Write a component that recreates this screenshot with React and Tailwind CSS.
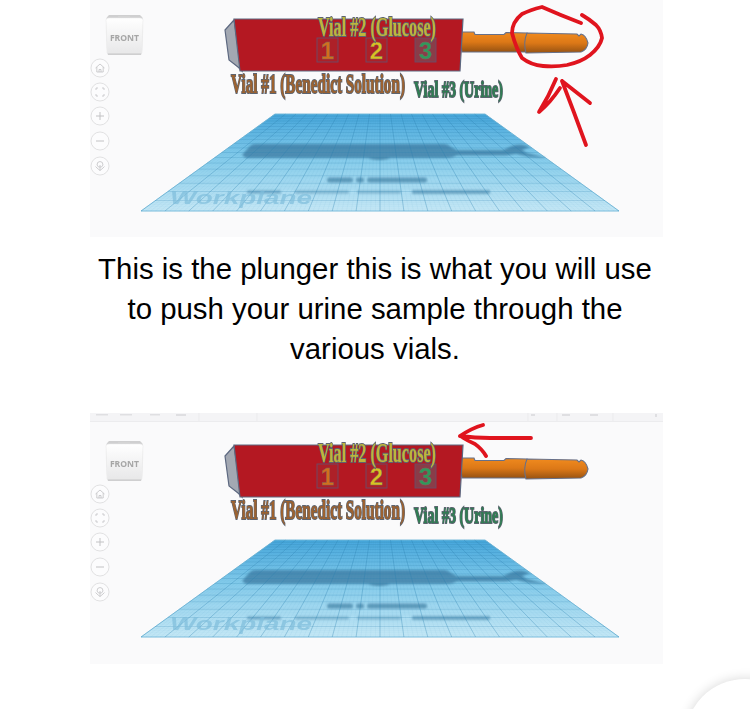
import React from "react";

const planeRows = (n) =>
  Array.from({ length: n + 1 }, (_, i) => {
    const v = i / n;
    const w = 1 / ((1 - v) / 210 + v / 478);
    const y = 114 + (97 * (w - 210)) / 268;
    const half = w / 2;
    return { y, x1: 290 - half, x2: 290 + half };
  });

const planeCols = (n) =>
  Array.from({ length: n + 1 }, (_, i) => {
    const u = i / n;
    return { x1: 185 + 210 * u, x2: 51 + 478 * u };
  });

const Workplane = () => (
  <g>
    <polygon points="185,114 395,114 529,211 51,211" fill="url(#planeFill)" stroke="#8ccde8" strokeWidth="0.8" />
    <g filter="url(#soft)">
      <path
        d="M152 155 L160 146 Q162 144 166 144 L354 144 Q358 144 361 147 L367 150 L413 150 L422 146 Q428 144 433 145 L440 147 L432 150 L437 153 L457 158 L440 157 L426 154 L416 155.5 L367 155.5 Q362 158 356 158 L300 158 Q296 160 288 160 Q282 160 278 158 L156 158 Z"
        fill="#3f7ea3"
        opacity="0.78"
      />
      <rect x="237" y="177.5" width="26" height="5" rx="2.5" fill="#4d8bad" opacity="0.8" />
      <rect x="266" y="177.5" width="8" height="5" rx="2.5" fill="#4d8bad" opacity="0.8" />
      <rect x="277" y="177.5" width="60" height="5" rx="2.5" fill="#4d8bad" opacity="0.8" />
      <rect x="157" y="190.5" width="34" height="3" rx="1" fill="#4d8bad" opacity="0.65" />
      <rect x="205" y="190.5" width="54" height="3" rx="1" fill="#4d8bad" opacity="0.5" />
      <rect x="267" y="190.5" width="44" height="3" rx="1" fill="#4d8bad" opacity="0.5" />
      <rect x="322" y="190" width="78" height="4" rx="1" fill="#4d8bad" opacity="0.65" />
    </g>
    {planeCols(100).map((c, i) => (
      <line key={i} x1={c.x1} y1="114" x2={c.x2} y2="211" stroke="#2f86b5" strokeWidth="0.4" opacity="0.12" />
    ))}
    {planeRows(100).map((r, i) => (
      <line key={i} x1={r.x1} y1={r.y} x2={r.x2} y2={r.y} stroke="#2f86b5" strokeWidth="0.4" opacity="0.08" />
    ))}
    {planeCols(20).map((c, i) => (
      <line key={i} x1={c.x1} y1="114" x2={c.x2} y2="211" stroke="#2b7fae" strokeWidth="0.6" opacity="0.5" />
    ))}
    {planeRows(20).map((r, i) => (
      <line key={i} x1={r.x1} y1={r.y} x2={r.x2} y2={r.y} stroke="#2b7fae" strokeWidth="0.6" opacity="0.35" />
    ))}
    <text
      x="80"
      y="204"
      fontFamily="'Liberation Sans', sans-serif"
      fontStyle="italic"
      fontWeight="700"
      fontSize="19"
      textLength="142"
      lengthAdjust="spacingAndGlyphs"
      fill="#7fbedc"
      opacity="0.7"
    >
      Workplane
    </text>
  </g>
);

const ViewCube = () => (
  <g>
    <path d="M17 52 L16 20 Q16 18 18 16 L19 15 L50 15 L52 17 Q53 18 53 20 L52 52 L51 55 L18 55 Z" fill="#cfcfd0" />
    <path d="M17 53 L16 20 Q16 18 19 18 L50 18 Q53 18 53 20 L52 53 Z" fill="url(#cubeFill)" stroke="#ececec" strokeWidth="0.6" />
    <rect x="28" y="16" width="12" height="1" fill="#d4d4d4" />
    <text x="34.5" y="41" textAnchor="middle" fontFamily="'Open Sans', sans-serif" fontWeight="700" fontSize="8.6" fill="#a6a6a6">
      FRONT
    </text>
  </g>
);

const SideButtons = () => (
  <g fill="none" stroke="#c2c2c4" strokeWidth="0.8">
    {[68, 92, 116, 141, 166].map((y) => (
      <circle key={y} cx="10" cy={y} r="9" fill="#fcfcfd" stroke="#d9d9db" />
    ))}
    <path d="M5.5 68 L10 64 L14.5 68 M6.8 67 V72 H13.2 V67 M9 72 V69.5 H11 V72" />
    <path d="M6 90 V88 H8 M12 88 H14 V90 M14 94 V96 H12 M8 96 H6 V94" />
    <path d="M10 112 V120 M6 116 H14" strokeWidth="1" />
    <path d="M6 141 H14" strokeWidth="1" />
    <path d="M7 165 Q7 161.5 10 161.5 Q13 161.5 13 165 L11.5 167 H8.5 Z M10 165 V170.5 M7 168 L10 170.5 L13 168 M5.5 166.5 L7 168 M14.5 166.5 L13 168" />
  </g>
);

const Plunger = () => (
  <g stroke="#66708a" strokeWidth="1.1" fill="url(#plungerFill)">
    <path d="M372 32 L384 32 L385 34.5 L414 34.5 L416 32.5 L437 33 L437 52 L372 52 Q370 42 372 32 Z" />
    <path d="M437 33 L487 34 L489 36 L491 34 Q496 35 498 43 Q497 50 491 52 L436 53 Q433 42 437 33 Z" />
  </g>
);

const CylinderBody = () => (
  <g>
    <polygon points="144,20 135,30 139,60 148,67 152,71" fill="#a3a8b2" stroke="#5c6880" strokeWidth="1.2" />
    <polygon points="144,19 373,19 370,71 150,71" fill="#b41822" stroke="#5c6880" strokeWidth="1.2" />
  </g>
);

const NumberBox = ({ x, w, color, digit, tint }) => (
  <g>
    <rect x={x} y="38" width={w} height="24" fill={tint} stroke="#6b4c68" strokeWidth="0.9" />
    <text
      x={x + w / 2}
      y="59"
      textAnchor="middle"
      fontFamily="'Liberation Sans', sans-serif"
      fontWeight="700"
      fontSize="24"
      fill={color}
      stroke="#7a6a60"
      strokeWidth="0.4"
    >
      {digit}
    </text>
  </g>
);

// squeezed serif labels, the muddy look comes from the heavy outline
const Label = ({ x, y, width, squeeze, size, fill, children }) => (
  <g transform={`translate(${x} ${y}) scale(${squeeze} 1)`}>
    <text
      x="0"
      y="0"
      fontFamily="'Liberation Serif', serif"
      fontWeight="700"
      fontSize={size}
      textLength={width / squeeze}
      lengthAdjust="spacingAndGlyphs"
      fill={fill}
      stroke="#5d6470"
      strokeWidth="2"
      paintOrder="stroke"
    >
      {children}
    </text>
  </g>
);

const Model = () => (
  <g>
    <Plunger />
    <CylinderBody />
    <NumberBox x={227} w={21} color="#d2701c" digit="1" tint="#ad2028" />
    <NumberBox x={276} w={21} color="#d8c322" digit="2" tint="#ad2028" />
    <NumberBox x={325} w={21} color="#2f9a5b" digit="3" tint="#8a3c48" />
    <Label x={228} y={36} width={118} squeeze={0.6} size={28} fill="#bdb63c">
      Vial #2 (Glucose)
    </Label>
    <Label x={141} y={93} width={174} squeeze={0.55} size={28} fill="#9c6230">
      Vial #1 (Benedict Solution)
    </Label>
    <Label x={324} y={97} width={89} squeeze={0.6} size={24} fill="#2f7d52">
      Vial #3 (Urine)
    </Label>
  </g>
);

const Defs = () => (
  <defs>
    <linearGradient id="planeFill" x1="0" y1="0" x2="0" y2="1">
      <stop offset="0" stopColor="#4aaade" />
      <stop offset="0.45" stopColor="#86cdec" />
      <stop offset="1" stopColor="#c4e7f5" />
    </linearGradient>
    <linearGradient id="cubeFill" x1="0" y1="0" x2="0" y2="1">
      <stop offset="0" stopColor="#ffffff" />
      <stop offset="1" stopColor="#e8e8e9" />
    </linearGradient>
    <linearGradient id="plungerFill" x1="0" y1="0" x2="0" y2="1">
      <stop offset="0" stopColor="#f08a1e" />
      <stop offset="0.5" stopColor="#dc7817" />
      <stop offset="1" stopColor="#965212" />
    </linearGradient>
    <filter id="soft" x="-5%" y="-30%" width="110%" height="160%">
      <feGaussianBlur stdDeviation="1" />
    </filter>
  </defs>
);

const Scene = () => (
  <>
    <ViewCube />
    <SideButtons />
    <Model />
    <Workplane />
  </>
);

const TopShot = () => (
  <div className="overflow-hidden bg-[#fafafb]">
    <svg width="573" height="237" viewBox="0 0 573 237" className="block blur-[0.4px]">
      <Defs />
      <Scene />
      <g fill="none" stroke="#e0141e" strokeWidth="3.8" strokeLinecap="round" strokeLinejoin="round">
        <path d="M491 23 Q470 15 452 7 Q440 10 432 14 Q422 22 422 33 Q426 48 432 58 Q441 65 453 66 Q466 67 477 65 Q491 62 500 55 Q510 47 512 38 Q511 30 506 25 Q499 19 492 15" />
        <path d="M496 145 Q484 112 472 81 M472 81 Q486 92 500 103 M466 79 Q459 96 449 112 Q460 103 470 88" />
      </g>
    </svg>
  </div>
);

const BottomShot = () => (
  <div className="overflow-hidden bg-[#fafafb]">
    <svg width="573" height="251" viewBox="0 0 573 251" className="block blur-[0.4px]">
      <Defs />
      <rect width="573" height="8" fill="#f4f4f6" />
      <line x1="0" y1="8.5" x2="573" y2="8.5" stroke="#ececee" />
      <g stroke="#ebebed">
        <line x1="109" y1="0" x2="109" y2="8" />
        <line x1="167" y1="0" x2="167" y2="8" />
        <line x1="438" y1="0" x2="438" y2="8" />
        <line x1="467" y1="0" x2="467" y2="8" />
        <line x1="523" y1="0" x2="523" y2="8" />
      </g>
      <g fill="#dfdfe2">
        <rect x="6" y="1" width="12" height="1.5" />
        <rect x="30" y="1" width="12" height="1.5" />
        <rect x="60" y="1" width="10" height="1.5" />
        <rect x="86" y="1" width="10" height="2" />
        <rect x="441" y="1" width="4" height="2" />
        <rect x="472" y="1" width="8" height="2" />
        <rect x="500" y="1" width="8" height="2" />
        <rect x="565" y="1" width="2" height="3" />
      </g>
      <g transform="translate(0 13)">
        <Scene />
      </g>
      <g fill="none" stroke="#e0141e" strokeWidth="3.8" strokeLinecap="round" strokeLinejoin="round">
        <path d="M441 25 L400 25 Q385 25 370 23 Q382 15 393 12 M370 23 Q378 28 385 31 Q392 36 396 43" />
      </g>
    </svg>
  </div>
);

export default function App() {
  return (
    <div className="relative h-[709px] overflow-hidden bg-white font-['Liberation_Sans',sans-serif]">
      <div className="ml-[90px] w-[573px]">
        <TopShot />
        <p className="mt-3 mb-11 -ml-[15px] w-[600px] text-center text-[29.4px] leading-[40px] text-black">
          This is the plunger this is what you will use
          <br />
          to push your urine sample through the
          <br />
          various vials.
        </p>
        <BottomShot />
      </div>
      <div className="absolute left-[685px] top-[679px] h-[120px] w-[120px] rounded-full bg-white shadow-[0_0_12px_rgba(0,0,0,0.16)]" />
    </div>
  );
}
